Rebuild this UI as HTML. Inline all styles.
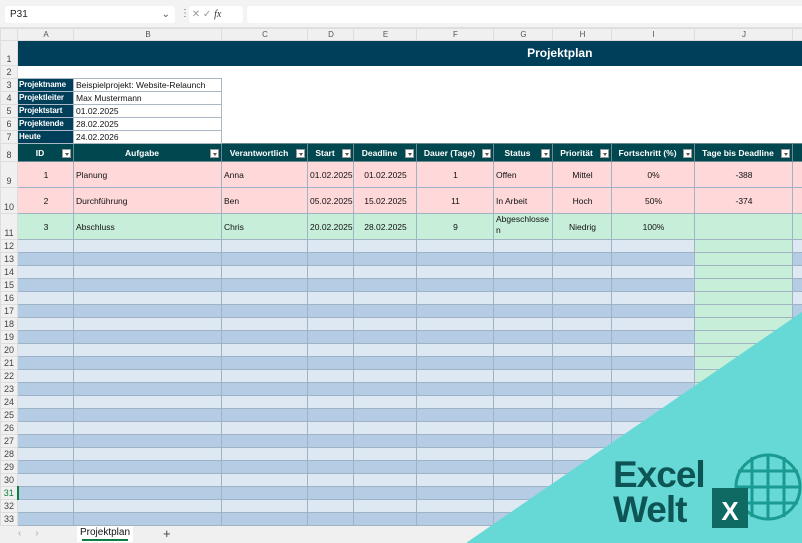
<!DOCTYPE html>
<html><head><meta charset="utf-8"><style>
*{margin:0;padding:0;box-sizing:border-box}
body{width:802px;height:543px;overflow:hidden;background:#fff;font-family:"Liberation Sans",sans-serif;position:relative}
.top{position:absolute;left:0;top:0;width:802px;height:28px;background:#f3f3f3;border-bottom:1px solid #e0e0e0}
.nb{position:absolute;left:5px;top:6px;width:170px;height:17px;background:#fff;border-radius:3px;font-size:10px;line-height:17px;padding-left:5px;color:#222}
.fb{position:absolute;left:247px;top:6px;width:560px;height:17px;background:#fff;border-radius:3px}
.ic{position:absolute;left:189px;top:6px;width:54px;height:17px;background:#fff;border-radius:3px;font-size:10px;color:#999;line-height:17px}
table{position:absolute;left:0;top:28px;width:802px;border-collapse:collapse;table-layout:fixed;font-size:8.5px;color:#111}
td{border:1px solid #9fb3c5;overflow:hidden;white-space:nowrap;padding:0 1px 0 2px;height:13px;line-height:12px}
td.rh{background:#f0f0f0;color:#444;text-align:center;border-color:#ddd;font-size:9px;vertical-align:bottom;padding:0}
tr.ch td{background:#f0f0f0;color:#555;text-align:center;border-color:#ddd;font-size:8px;height:12px;line-height:10px}
tr.t td.c{background:#003f5a;color:#fff;border:none}
tr.w td.c{border:none;background:#fff}
td.lab{background:#003f5a;color:#fff;font-weight:bold;border-color:#a9b8c4;padding-left:1px;font-size:8px;letter-spacing:-0.1px}
td.val{background:#fff;border-color:#a9b8c4}
td.no{border:none;background:#fff}
tr.h td.c{background:#01474f;color:#fff;font-weight:bold;text-align:center;border-color:#6a8a90;position:relative;padding-right:12px;padding-left:1px}
tr.h td.c i{position:absolute;right:2px;top:5px;width:9px;height:9px;background:#fff;border:1px solid #999}
tr.h td.c i:after{content:"";position:absolute;left:2px;top:3px;border:2px solid transparent;border-top:3px solid #555}
tr.p td.c{background:#ffd8da}
tr.g td.c{background:#c6eed8}
tr.a td.c{background:#dde8f3}
tr.b td.c{background:#b4cce4}
tr.a td.j,tr.b td.j{background:#c6eed8}
.ctr{text-align:center}
.tabs{position:absolute;left:0;top:526px;width:802px;height:17px;background:#f0f0f0}
</style></head><body>
<div class="top"><div class="nb">P31<span style="position:absolute;right:5px;color:#555">⌄</span></div>
<div style="position:absolute;left:180px;top:8px;font-size:10px;color:#666">⋮</div>
<div class="ic">&nbsp;✕ ✓ <i style="color:#333;font-family:'Liberation Serif',serif">fx</i></div><div class="fb"></div></div>
<table>
<colgroup><col style="width:17px"><col style="width:56px"><col style="width:148px"><col style="width:86px"><col style="width:46px"><col style="width:63px"><col style="width:77px"><col style="width:59px"><col style="width:59px"><col style="width:83px"><col style="width:98px"><col style="width:10px"></colgroup>
<tr class="ch"><td></td><td>A</td><td>B</td><td>C</td><td>D</td><td>E</td><td>F</td><td>G</td><td>H</td><td>I</td><td>J</td><td></td></tr>
<tr class="t"><td class="rh" style="height:25px">1</td><td class="c" colspan="11" style="text-align:center;font-weight:bold;font-size:12px;padding-left:300px;vertical-align:middle">Projektplan</td></tr>
<tr class="w"><td class="rh">2</td><td class="c" colspan="11"></td></tr>
<tr><td class="rh">3</td><td class="lab">Projektname</td><td class="val">Beispielprojekt: Website-Relaunch</td><td class="no" colspan="9"></td></tr>
<tr><td class="rh">4</td><td class="lab">Projektleiter</td><td class="val">Max Mustermann</td><td class="no" colspan="9"></td></tr>
<tr><td class="rh">5</td><td class="lab">Projektstart</td><td class="val">01.02.2025</td><td class="no" colspan="9"></td></tr>
<tr><td class="rh">6</td><td class="lab">Projektende</td><td class="val">28.02.2025</td><td class="no" colspan="9"></td></tr>
<tr><td class="rh">7</td><td class="lab">Heute</td><td class="val">24.02.2026</td><td class="no" colspan="9"></td></tr>
<tr class="h"><td class="rh" style="height:18px">8</td><td class="c">ID<i></i></td><td class="c">Aufgabe<i></i></td><td class="c">Verantwortlich<i></i></td><td class="c">Start<i></i></td><td class="c">Deadline<i></i></td><td class="c">Dauer (Tage)<i></i></td><td class="c">Status<i></i></td><td class="c">Priorität<i></i></td><td class="c">Fortschritt (%)<i></i></td><td class="c">Tage bis Deadline<i></i></td><td class="c"></td></tr>
<tr class="p"><td class="rh" style="height:26px">9</td><td class="c ctr">1</td><td class="c">Planung</td><td class="c">Anna</td><td class="c">01.02.2025</td><td class="c ctr">01.02.2025</td><td class="c ctr">1</td><td class="c">Offen</td><td class="c ctr">Mittel</td><td class="c ctr">0%</td><td class="c ctr">-388</td><td class="c"></td></tr>
<tr class="p"><td class="rh" style="height:26px">10</td><td class="c ctr">2</td><td class="c">Durchführung</td><td class="c">Ben</td><td class="c">05.02.2025</td><td class="c ctr">15.02.2025</td><td class="c ctr">11</td><td class="c">In Arbeit</td><td class="c ctr">Hoch</td><td class="c ctr">50%</td><td class="c ctr">-374</td><td class="c"></td></tr>
<tr class="g"><td class="rh" style="height:26px">11</td><td class="c ctr">3</td><td class="c">Abschluss</td><td class="c">Chris</td><td class="c">20.02.2025</td><td class="c ctr">28.02.2025</td><td class="c ctr">9</td><td class="c" style="white-space:normal;line-height:11px;vertical-align:top">Abgeschlosse n</td><td class="c ctr">Niedrig</td><td class="c ctr">100%</td><td class="c"></td><td class="c"></td></tr>
<tr class="a"><td class="rh">12</td><td class="c"></td><td class="c"></td><td class="c"></td><td class="c"></td><td class="c"></td><td class="c"></td><td class="c"></td><td class="c"></td><td class="c"></td><td class="c j"></td><td class="c"></td></tr>
<tr class="b"><td class="rh">13</td><td class="c"></td><td class="c"></td><td class="c"></td><td class="c"></td><td class="c"></td><td class="c"></td><td class="c"></td><td class="c"></td><td class="c"></td><td class="c j"></td><td class="c"></td></tr>
<tr class="a"><td class="rh">14</td><td class="c"></td><td class="c"></td><td class="c"></td><td class="c"></td><td class="c"></td><td class="c"></td><td class="c"></td><td class="c"></td><td class="c"></td><td class="c j"></td><td class="c"></td></tr>
<tr class="b"><td class="rh">15</td><td class="c"></td><td class="c"></td><td class="c"></td><td class="c"></td><td class="c"></td><td class="c"></td><td class="c"></td><td class="c"></td><td class="c"></td><td class="c j"></td><td class="c"></td></tr>
<tr class="a"><td class="rh">16</td><td class="c"></td><td class="c"></td><td class="c"></td><td class="c"></td><td class="c"></td><td class="c"></td><td class="c"></td><td class="c"></td><td class="c"></td><td class="c j"></td><td class="c"></td></tr>
<tr class="b"><td class="rh">17</td><td class="c"></td><td class="c"></td><td class="c"></td><td class="c"></td><td class="c"></td><td class="c"></td><td class="c"></td><td class="c"></td><td class="c"></td><td class="c j"></td><td class="c"></td></tr>
<tr class="a"><td class="rh">18</td><td class="c"></td><td class="c"></td><td class="c"></td><td class="c"></td><td class="c"></td><td class="c"></td><td class="c"></td><td class="c"></td><td class="c"></td><td class="c j"></td><td class="c"></td></tr>
<tr class="b"><td class="rh">19</td><td class="c"></td><td class="c"></td><td class="c"></td><td class="c"></td><td class="c"></td><td class="c"></td><td class="c"></td><td class="c"></td><td class="c"></td><td class="c j"></td><td class="c"></td></tr>
<tr class="a"><td class="rh">20</td><td class="c"></td><td class="c"></td><td class="c"></td><td class="c"></td><td class="c"></td><td class="c"></td><td class="c"></td><td class="c"></td><td class="c"></td><td class="c j"></td><td class="c"></td></tr>
<tr class="b"><td class="rh">21</td><td class="c"></td><td class="c"></td><td class="c"></td><td class="c"></td><td class="c"></td><td class="c"></td><td class="c"></td><td class="c"></td><td class="c"></td><td class="c j"></td><td class="c"></td></tr>
<tr class="a"><td class="rh">22</td><td class="c"></td><td class="c"></td><td class="c"></td><td class="c"></td><td class="c"></td><td class="c"></td><td class="c"></td><td class="c"></td><td class="c"></td><td class="c j"></td><td class="c"></td></tr>
<tr class="b"><td class="rh">23</td><td class="c"></td><td class="c"></td><td class="c"></td><td class="c"></td><td class="c"></td><td class="c"></td><td class="c"></td><td class="c"></td><td class="c"></td><td class="c j"></td><td class="c"></td></tr>
<tr class="a"><td class="rh">24</td><td class="c"></td><td class="c"></td><td class="c"></td><td class="c"></td><td class="c"></td><td class="c"></td><td class="c"></td><td class="c"></td><td class="c"></td><td class="c j"></td><td class="c"></td></tr>
<tr class="b"><td class="rh">25</td><td class="c"></td><td class="c"></td><td class="c"></td><td class="c"></td><td class="c"></td><td class="c"></td><td class="c"></td><td class="c"></td><td class="c"></td><td class="c j"></td><td class="c"></td></tr>
<tr class="a"><td class="rh">26</td><td class="c"></td><td class="c"></td><td class="c"></td><td class="c"></td><td class="c"></td><td class="c"></td><td class="c"></td><td class="c"></td><td class="c"></td><td class="c j"></td><td class="c"></td></tr>
<tr class="b"><td class="rh">27</td><td class="c"></td><td class="c"></td><td class="c"></td><td class="c"></td><td class="c"></td><td class="c"></td><td class="c"></td><td class="c"></td><td class="c"></td><td class="c j"></td><td class="c"></td></tr>
<tr class="a"><td class="rh">28</td><td class="c"></td><td class="c"></td><td class="c"></td><td class="c"></td><td class="c"></td><td class="c"></td><td class="c"></td><td class="c"></td><td class="c"></td><td class="c j"></td><td class="c"></td></tr>
<tr class="b"><td class="rh">29</td><td class="c"></td><td class="c"></td><td class="c"></td><td class="c"></td><td class="c"></td><td class="c"></td><td class="c"></td><td class="c"></td><td class="c"></td><td class="c j"></td><td class="c"></td></tr>
<tr class="a"><td class="rh">30</td><td class="c"></td><td class="c"></td><td class="c"></td><td class="c"></td><td class="c"></td><td class="c"></td><td class="c"></td><td class="c"></td><td class="c"></td><td class="c j"></td><td class="c"></td></tr>
<tr class="b"><td class="rh" style="color:#107c41;border-right:2px solid #107c41">31</td><td class="c"></td><td class="c"></td><td class="c"></td><td class="c"></td><td class="c"></td><td class="c"></td><td class="c"></td><td class="c"></td><td class="c"></td><td class="c j"></td><td class="c"></td></tr>
<tr class="a"><td class="rh">32</td><td class="c"></td><td class="c"></td><td class="c"></td><td class="c"></td><td class="c"></td><td class="c"></td><td class="c"></td><td class="c"></td><td class="c"></td><td class="c j"></td><td class="c"></td></tr>
<tr class="b"><td class="rh">33</td><td class="c"></td><td class="c"></td><td class="c"></td><td class="c"></td><td class="c"></td><td class="c"></td><td class="c"></td><td class="c"></td><td class="c"></td><td class="c j"></td><td class="c"></td></tr>
</table>
<div class="tabs"><span style="position:absolute;left:18px;top:2px;font-size:10px;color:#aaa">‹ &nbsp;&nbsp;&nbsp; ›</span>
<div style="position:absolute;left:77px;top:0;width:56px;height:16px;background:#fff;font-size:10px;text-align:center;line-height:14px;color:#111">Projektplan<div style="position:absolute;left:5px;right:5px;bottom:1px;height:2px;background:#107c41"></div></div>
<span style="position:absolute;left:163px;top:0;font-size:13px;color:#444">+</span></div>
<svg style="position:absolute;left:0;top:0" width="802" height="543">
<polygon points="802,312 802,543 466,543" fill="#66d9d6"/>
<circle cx="768" cy="487" r="32" fill="none" stroke="#1a9a90" stroke-width="3"/>
<g stroke="#1a9a90" stroke-width="3">
<line x1="752" y1="457" x2="752" y2="517"/><line x1="768" y1="455" x2="768" y2="519"/><line x1="784" y1="457" x2="784" y2="517"/>
<line x1="738" y1="471" x2="798" y2="471"/><line x1="736" y1="487" x2="800" y2="487"/><line x1="738" y1="503" x2="798" y2="503"/></g>
<rect x="712" y="488" width="36" height="40" fill="#0e6a63"/>
<text x="730" y="520" text-anchor="middle" font-family="Liberation Sans" font-weight="bold" font-size="26" fill="#fff">X</text>
<text x="613" y="487" font-family="Liberation Sans" font-weight="bold" font-size="37" fill="#0d5454" letter-spacing="-1">Excel</text>
<text x="613" y="522" font-family="Liberation Sans" font-weight="bold" font-size="37" fill="#0d5454" letter-spacing="-1">Welt</text>
</svg>
</body></html>
